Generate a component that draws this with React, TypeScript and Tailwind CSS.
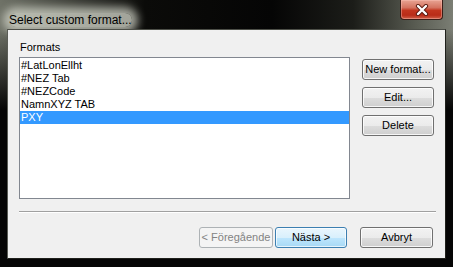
import React from "react";

const font = { fontFamily: '"Liberation Sans", Arial, sans-serif' };

function Btn({
  children,
  w,
  variant = "normal",
}: {
  children: React.ReactNode;
  w: string;
  variant?: "normal" | "default" | "disabled";
}) {
  const base =
    "h-[21px] flex items-center justify-center rounded-[3px] border text-[11px] leading-none";
  const styles =
    variant === "default"
      ? "border-[#3c7fb1] text-black bg-[linear-gradient(180deg,#eaf6fd_0%,#d9f0fc_50%,#bee6fd_51%,#a7d9f5_100%)] shadow-[inset_0_0_0_1px_rgba(255,255,255,0.7)]"
      : variant === "disabled"
      ? "border-[#adb2b5] text-[#838383] bg-[#f4f4f4]"
      : "border-[#707070] text-black bg-[linear-gradient(180deg,#f2f2f2_0%,#ebebeb_50%,#dddddd_51%,#cfcfcf_100%)] shadow-[inset_0_0_0_1px_rgba(255,255,255,0.8)]";
  return <div className={`${base} ${styles} ${w}`}>{children}</div>;
}

export default function App() {
  const items = ["#LatLonEllht", "#NEZ Tab", "#NEZCode", "NamnXYZ TAB", "PXY"];
  return (
    <div
      style={font}
      className="w-[453px] h-[267px] flex flex-col bg-[#050505] bg-[linear-gradient(180deg,rgba(0,0,0,0)_0px,rgba(0,0,0,0)_30px,#050505_110px),linear-gradient(90deg,#6f7267_0%,#4a4c44_12%,#0b0b09_32%,#050505_60%,#1c1d19_78%,#5a5d53_92%,#7b7e74_100%)]"
    >
      {/* Title bar */}
      <div className="h-[29px] flex items-start justify-between shrink-0">
        <div className="pl-[9px] pt-[7px]">
          <span className="text-[12px] leading-[14px] text-black bg-[rgba(210,212,200,0.75)] rounded-full shadow-[0_0_8px_6px_rgba(210,212,200,0.75)]">
            Select custom format...
          </span>
        </div>
        <div className="mr-[10px] w-[43px] h-[20px] rounded-b-[4px] border border-t-0 border-[#3b1d17] bg-[linear-gradient(180deg,#e8a493_0%,#d47360_40%,#c2351e_55%,#b92c18_80%,#d0614a_100%)] shadow-[inset_0_0_0_1px_rgba(255,200,190,0.4)] flex items-center justify-center">
          <svg width="14" height="12" viewBox="0 0 14 12">
            <path
              d="M3 2 L11 10 M11 2 L3 10"
              stroke="#5a1a10"
              strokeWidth="4.2"
              strokeLinecap="round"
              fill="none"
            />
            <path
              d="M3 2 L11 10 M11 2 L3 10"
              stroke="#ffffff"
              strokeWidth="2.4"
              strokeLinecap="round"
              fill="none"
            />
          </svg>
        </div>
      </div>

      {/* Client */}
      <div className="mx-[7px] h-[230px] bg-[#f0f0f0] border border-t-[#4d4f48] border-l-[#5a5c55] border-r-[#1f201c] border-b-[#1f201c] flex flex-col">
        <div className="pl-[12px] pt-[10px] text-[11px] leading-[14px] text-black">Formats</div>
        <div className="flex pl-[11px] mt-[3px] gap-[12px]">
          <div className="w-[331px] h-[142px] bg-white border border-t-[#828790] border-l-[#828790] border-r-[#828790] border-b-[#828790] py-[1px]">
            {items.map((t, i) => (
              <div
                key={t}
                className={`h-[13px] pl-[1px] mx-[0px] text-[11px] leading-[13px] ${
                  i === 4 ? "bg-[#3399ff] text-white" : "text-black"
                }`}
              >
                {t}
              </div>
            ))}
          </div>
          <div className="flex flex-col gap-[7px] pt-[2px]">
            <Btn w="w-[72px]">New format...</Btn>
            <Btn w="w-[72px]">Edit...</Btn>
            <Btn w="w-[72px]">Delete</Btn>
          </div>
        </div>
        <div className="ml-[11px] mr-[9px] mt-[12px] h-[2px] border-t border-[#a0a0a0] border-b border-b-white" />
        <div className="flex justify-end pr-[12px] mt-[14px]">
          <Btn w="w-[74px]" variant="disabled">
            &lt; Föregående
          </Btn>
          <div className="w-[2px]" />
          <Btn w="w-[72px]" variant="default">
            Nästa &gt;
          </Btn>
          <div className="w-[13px]" />
          <Btn w="w-[73px]">Avbryt</Btn>
        </div>
      </div>
    </div>
  );
}
